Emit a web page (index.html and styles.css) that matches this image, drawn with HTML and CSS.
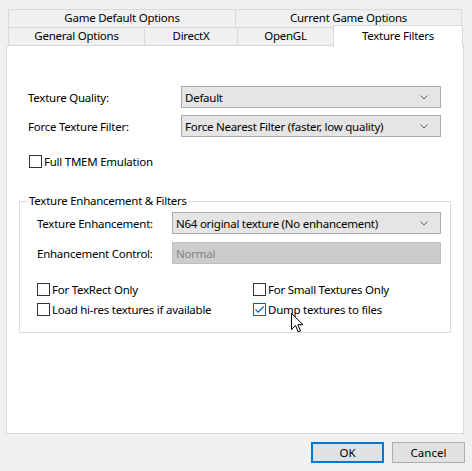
FILE: index.html
```html
<!DOCTYPE html>
<html>
<head>
<meta charset="utf-8">
<link rel="stylesheet" href="styles.css">
</head>
<body>
<div class="dialog">
  <div class="tabs">
    <div class="tab-row row-back">
      <div class="tab w-half1">Game Default Options</div>
      <div class="tab w-half2">Current Game Options</div>
    </div>
    <div class="tab-row row-front">
      <div class="tab w-general">General Options</div>
      <div class="tab w-dx">DirectX</div>
      <div class="tab w-gl">OpenGL</div>
      <div class="tab w-tex active">Texture Filters</div>
    </div>
  </div>

  <div class="panel">
    <div class="form-grid">
      <label class="lbl">Texture Quality:</label>
      <div class="combo"><span>Default</span><svg class="chev" viewBox="0 0 8 5"><path d="M0.5 0.5 L4 4 L7.5 0.5"/></svg></div>
      <label class="lbl">Force Texture Filter:</label>
      <div class="combo"><span>Force Nearest Filter (faster, low quality)</span><svg class="chev" viewBox="0 0 8 5"><path d="M0.5 0.5 L4 4 L7.5 0.5"/></svg></div>
    </div>

    <div class="check tmem"><span class="box"></span>Full TMEM Emulation</div>

    <fieldset class="group">
      <legend>Texture Enhancement &amp; Filters</legend>
      <div class="group-body">
        <div class="form-grid inner">
          <label class="lbl">Texture Enhancement:</label>
          <div class="combo"><span>N64 original texture (No enhancement)</span><svg class="chev" viewBox="0 0 8 5"><path d="M0.5 0.5 L4 4 L7.5 0.5"/></svg></div>
          <label class="lbl">Enhancement Control:</label>
          <div class="combo disabled"><span>Normal</span><svg class="chev" viewBox="0 0 8 5"><path d="M0.5 0.5 L4 4 L7.5 0.5"/></svg></div>
        </div>
        <div class="checks">
          <div class="check"><span class="box"></span>For TexRect Only</div>
          <div class="check"><span class="box"></span>For Small Textures Only</div>
          <div class="check"><span class="box"></span>Load hi-res textures if available</div>
          <div class="check"><span class="box checked"><svg viewBox="0 0 11 11"><path d="M1.5 5.5 L4.2 8.2 L9.7 2.5"/></svg></span>Dump textures to files</div>
        </div>
      </div>
    </fieldset>
  </div>

  <div class="buttons">
    <button class="btn default">OK</button>
    <button class="btn">Cancel</button>
  </div>

  <svg class="cursor" width="13" height="21" viewBox="0 0 13 21"><path d="M0.5 0.5 L0.5 16.5 L4.5 12.5 L7.3 19 L9.6 18 L6.9 11.7 L12 11.7 Z"/></svg>
</div>
</body>
</html>
```

FILE: styles.css
```css
* { box-sizing: border-box; }

html, body {
  margin: 0;
  padding: 0;
  background: #f0f0f0;
}

body {
  width: 472px;
  height: 471px;
  overflow: hidden;
  font-family: "Noto Sans", "Liberation Sans", sans-serif;
  font-size: 11.5px;
  letter-spacing: -0.25px;
  color: #000;
}

.dialog {
  position: relative;
  padding: 9px 7px 0 6px;
}

/* ---- tab strip ---- */
.tabs {
  position: relative;
  z-index: 2;
  padding-left: 2px;
}

.tab-row {
  display: flex;
  height: 19px;
}

.row-front {
  margin-top: -1px;
}

.tab {
  display: flex;
  align-items: center;
  justify-content: center;
  height: 100%;
  border: 1px solid #d9d9d9;
  background: #f0f0f0;
  margin-right: -1px;
  white-space: nowrap;
  line-height: 1;
  padding-bottom: 1px;
}

.w-half1 { width: 228px; }
.w-half2 { width: 227px; }
.w-general { width: 137px; }
.w-dx { width: 94px; }
.w-gl { width: 97px; }
.w-tex { width: 130px; }

.tab.active {
  background: #fff;
  border-bottom: none;
  height: 22px;
  margin-top: -2px;
  padding-bottom: 2px;
  position: relative;
}

/* ---- page panel ---- */
.panel {
  position: relative;
  z-index: 1;
  width: 458px;
  height: 389px;
  margin-top: -1px;
  background: #fff;
  border: 1px solid #d9d9d9;
  padding: 40px 0 0 21px;
}

.form-grid {
  display: grid;
  grid-template-columns: 153px 260px;
  row-gap: 7px;
  align-items: center;
}

.lbl {
  white-space: nowrap;
}

.combo {
  display: flex;
  align-items: center;
  justify-content: space-between;
  height: 22px;
  background: #e5e5e5;
  border: 1px solid #acacac;
  padding: 0 12px 0 3px;
  white-space: nowrap;
}

.combo .chev {
  width: 8px;
  height: 5px;
  fill: none;
  stroke: #606060;
  stroke-width: 1;
}

.combo.disabled {
  background: #cccccc;
  border-color: #bfbfbf;
  color: #838383;
}

.combo.disabled .chev { stroke: #bfbfbf; }

.check {
  display: flex;
  align-items: center;
  white-space: nowrap;
  height: 16px;
}

.box {
  flex: none;
  width: 13px;
  height: 13px;
  border: 1px solid #333;
  background: #fff;
  margin-right: 2px;
}

.box.checked {
  border-color: #005fb8;
  display: flex;
  align-items: center;
  justify-content: center;
}

.box.checked svg {
  width: 11px;
  height: 11px;
  fill: none;
  stroke: #005fb8;
  stroke-width: 1.2;
}

.tmem {
  margin-top: 16px;
  margin-left: 1px;
}

/* ---- group box ---- */
.group {
  margin: 25px 0 0 -9px;
  width: 432px;
  height: 139px;
  border: 1px solid #dcdcdc;
  padding: 0;
}

.group legend {
  padding: 0 1px;
  margin-left: 8px;
  line-height: 14px;
}

.group-body {
  padding: 4px 0 0 17px;
}

.form-grid.inner {
  grid-template-columns: 135px 269px;
  row-gap: 8px;
}

.checks {
  display: grid;
  grid-template-columns: 216px auto;
  row-gap: 4px;
  margin-top: 17px;
}

/* ---- dialog buttons ---- */
.buttons {
  display: flex;
  justify-content: flex-end;
  gap: 8px;
  margin-top: 8px;
}

.btn {
  width: 73px;
  height: 21px;
  font: inherit;
  color: #000;
  background: #e1e1e1;
  border: 1px solid #adadad;
  padding: 0;
}

.btn.default {
  border: 2px solid #0078d7;
}

/* mouse pointer resting over the dump option */
.cursor {
  position: absolute;
  left: 291px;
  top: 313px;
  z-index: 5;
}

.cursor path {
  fill: #fff;
  stroke: #000;
  stroke-width: 1;
  stroke-linejoin: miter;
}
```
